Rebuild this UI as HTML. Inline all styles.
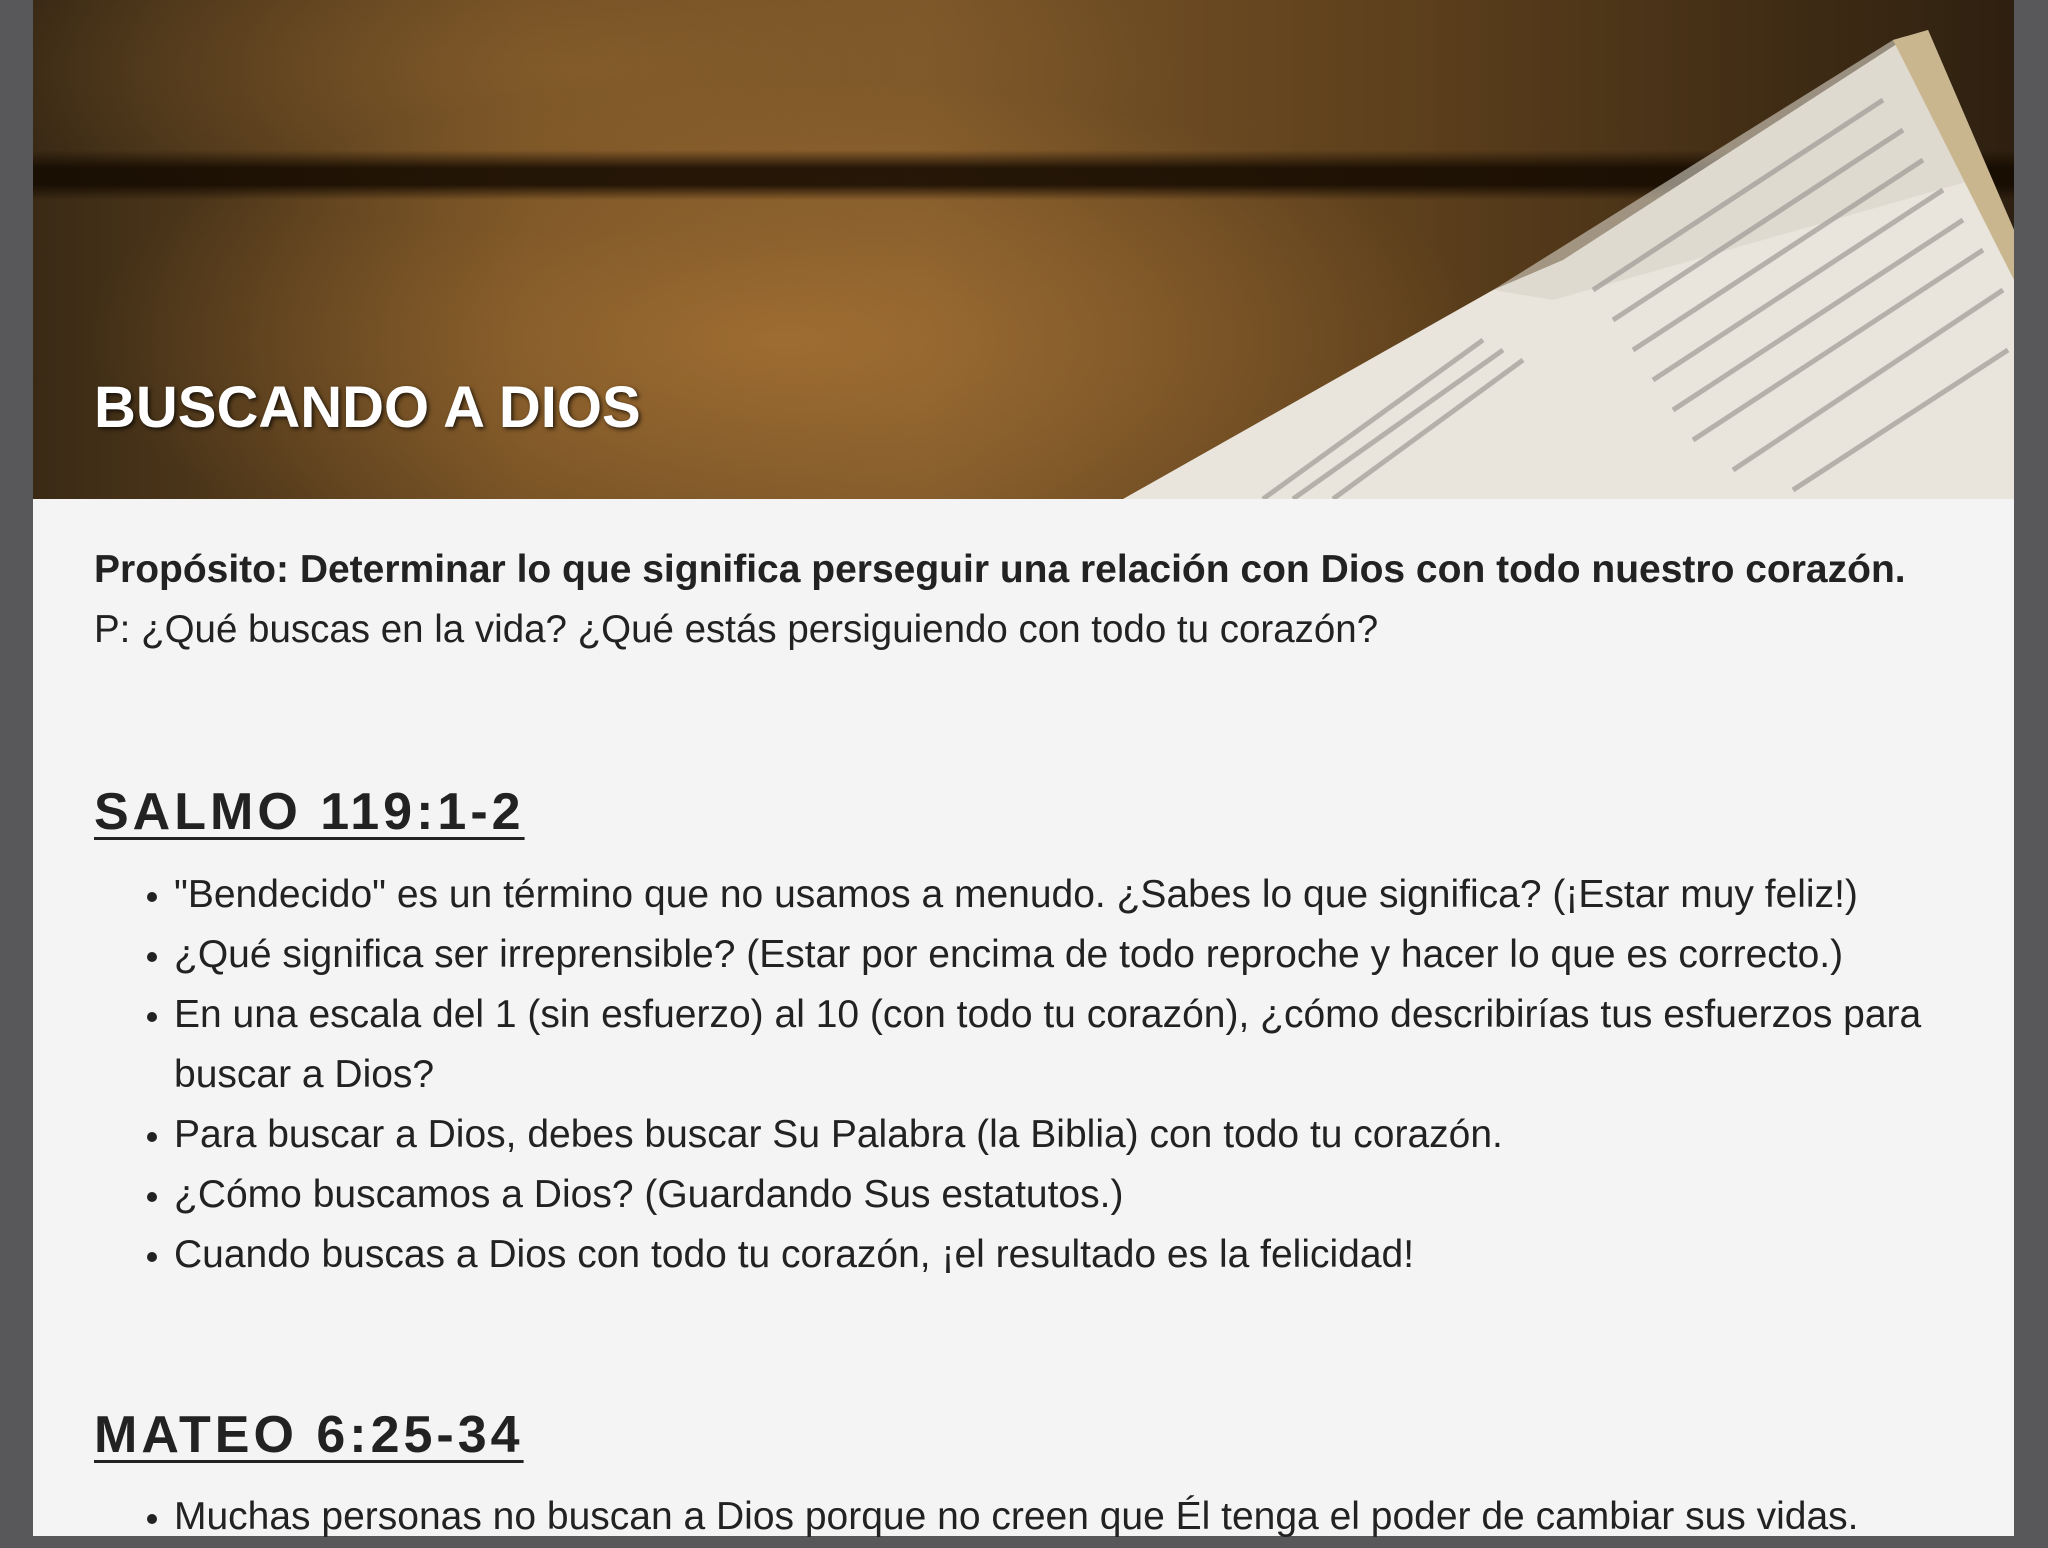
<!DOCTYPE html>
<html><head><meta charset="utf-8"><style>
html,body{margin:0;padding:0}
body{width:2048px;height:1536px;background:#58585a;position:relative;overflow:hidden;font-family:"Liberation Sans",sans-serif;color:#222}
#page{position:absolute;left:33px;top:0;width:1981px;height:1536px;background:#f4f4f4}
#hero{position:absolute;left:0;top:0;width:1981px;height:499px;overflow:hidden;
background:
linear-gradient(180deg,rgba(0,0,0,0) 0,rgba(0,0,0,0) 150px,rgba(20,10,0,.85) 168px,rgba(20,10,0,.85) 185px,rgba(0,0,0,0) 200px),
radial-gradient(ellipse 700px 260px at 750px 340px,rgba(190,130,60,.55),rgba(0,0,0,0)),
radial-gradient(ellipse 600px 160px at 550px 70px,rgba(150,105,50,.5),rgba(0,0,0,0)),
linear-gradient(90deg,#3a2a15 0,#6e4c22 25%,#7a5528 45%,#5c3f1c 70%,#2e2010 100%)}
#hero svg{position:absolute;left:0;top:0}
h1{position:absolute;left:61px;top:374px;margin:0;font-size:58px;font-weight:bold;color:#fff;text-shadow:2px 2px 4px rgba(0,0,0,.7)}
.t{position:absolute;left:61px;font-size:38.5px;white-space:nowrap}
.b{font-weight:bold;font-size:39px}
h2{position:absolute;left:61px;margin:0;font-size:52px;font-weight:bold;letter-spacing:4px;text-decoration:underline;text-decoration-thickness:3px;text-underline-offset:8px;color:#222}
ul{position:absolute;left:61px;margin:0;padding:0 0 0 80px;font-size:39px;line-height:60px;width:1850px}
li::marker{font-size:34px}
</style></head><body>
<div id="page">
<div id="hero">
<svg width="1981" height="499" viewBox="0 0 1981 499">
<polygon points="1090,499 1460,290 1530,260 1870,40 1895,30 1981,230 1981,499" fill="#e9e4dc"/>
<polygon points="1460,290 1860,40 1895,30 1940,180 1520,300" fill="#d9d3c8" opacity=".6"/>
<polygon points="1860,40 1895,30 1981,230 1981,280" fill="#c9b68e"/>
<g stroke="#8a8884" stroke-width="5" opacity=".55">
<line x1="1230" y1="499" x2="1450" y2="340"/><line x1="1260" y1="499" x2="1470" y2="350"/><line x1="1300" y1="499" x2="1490" y2="360"/>
<line x1="1560" y1="290" x2="1850" y2="100"/><line x1="1580" y1="320" x2="1870" y2="130"/><line x1="1600" y1="350" x2="1890" y2="160"/>
<line x1="1620" y1="380" x2="1910" y2="190"/><line x1="1640" y1="410" x2="1930" y2="220"/><line x1="1660" y1="440" x2="1950" y2="250"/>
<line x1="1700" y1="470" x2="1970" y2="290"/><line x1="1760" y1="490" x2="1975" y2="350"/>
</g>
</svg>
<h1>BUSCANDO A DIOS</h1>
</div>
<div class="t b" style="top:548px">Propósito: Determinar lo que significa perseguir una relación con Dios con todo nuestro corazón.</div>
<div class="t" style="top:608px">P: ¿Qué buscas en la vida? ¿Qué estás persiguiendo con todo tu corazón?</div>
<h2 style="top:782px">SALMO 119:1-2</h2>
<ul style="top:865px">
<li>"Bendecido" es un término que no usamos a menudo. ¿Sabes lo que significa? (¡Estar muy feliz!)</li>
<li>¿Qué significa ser irreprensible? (Estar por encima de todo reproche y hacer lo que es correcto.)</li>
<li>En una escala del 1 (sin esfuerzo) al 10 (con todo tu corazón), ¿cómo describirías tus esfuerzos para<br>buscar a Dios?</li>
<li>Para buscar a Dios, debes buscar Su Palabra (la Biblia) con todo tu corazón.</li>
<li>¿Cómo buscamos a Dios? (Guardando Sus estatutos.)</li>
<li>Cuando buscas a Dios con todo tu corazón, ¡el resultado es la felicidad!</li>
</ul>
<h2 style="top:1405px">MATEO 6:25-34</h2>
<ul style="top:1487px">
<li>Muchas personas no buscan a Dios porque no creen que Él tenga el poder de cambiar sus vidas.</li>
</ul>
</div>
</body></html>
